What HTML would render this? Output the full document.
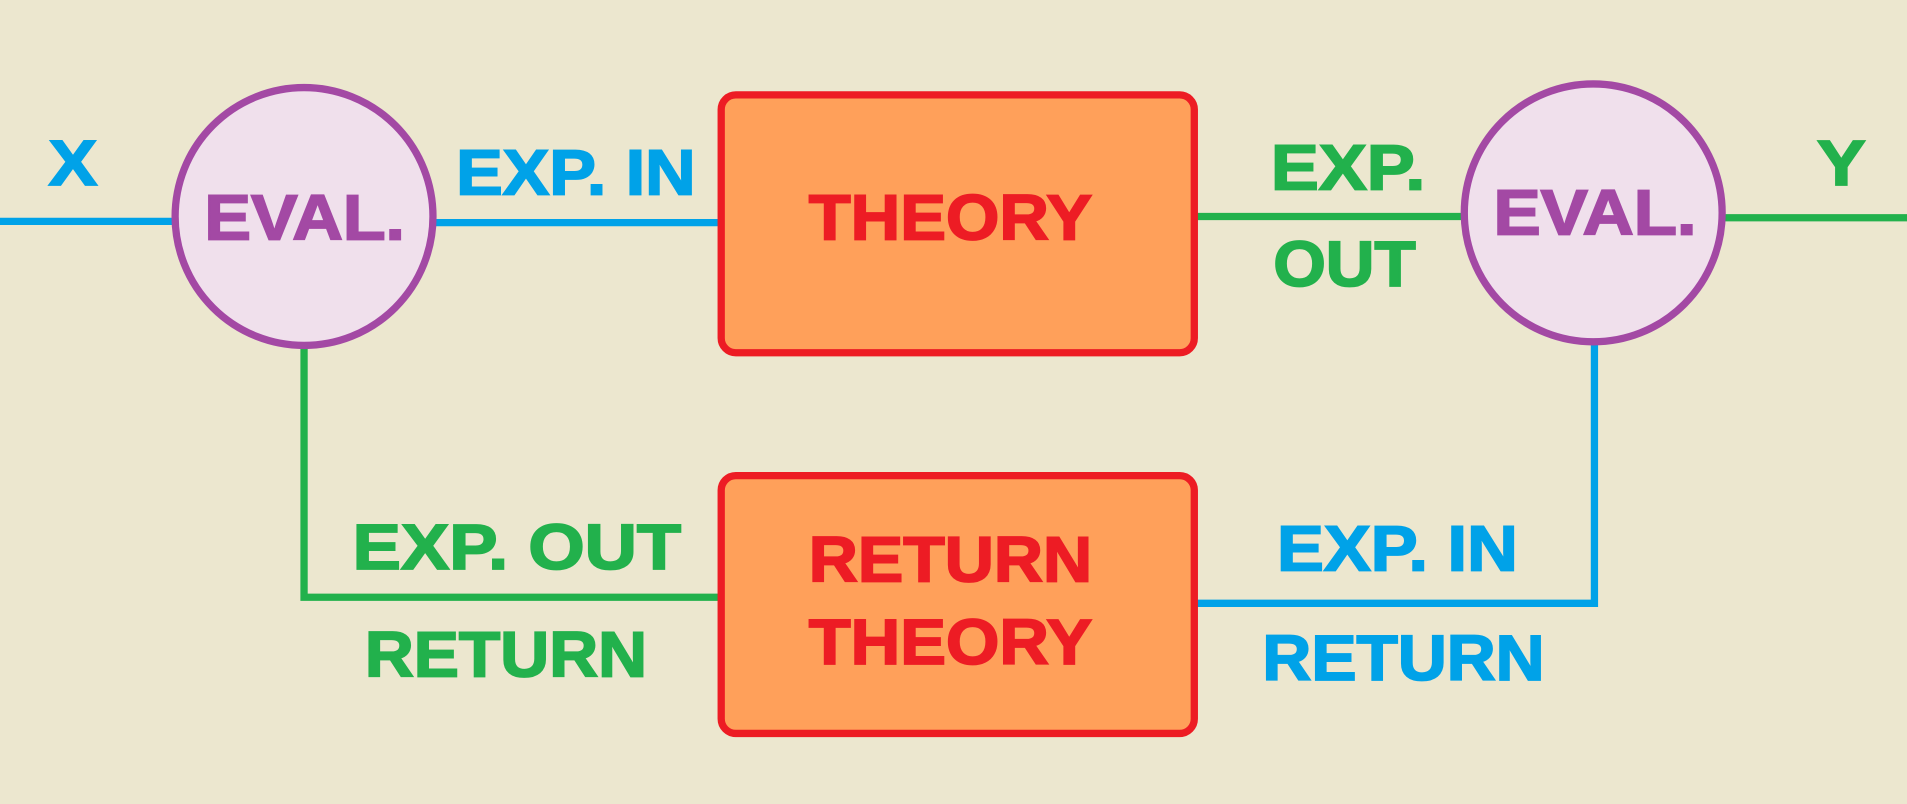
<!DOCTYPE html>
<html><head><meta charset="utf-8"><style>
html,body{margin:0;padding:0;background:#ece7cf;overflow:hidden}
svg{display:block}
text{font-family:"Liberation Sans",sans-serif;font-weight:bold;font-size:53px;stroke-width:1.5;stroke-linejoin:miter}
</style></head><body>
<svg width="1907" height="804" viewBox="0 0 1568 661" preserveAspectRatio="none" xmlns="http://www.w3.org/2000/svg">
<rect width="1568" height="661" fill="#ece7cf"/>
<g stroke-width="6" fill="none">
<line x1="0" y1="182" x2="145" y2="182" stroke="#00a2e8"/>
<line x1="355" y1="183" x2="593" y2="183" stroke="#00a2e8"/>
<line x1="982" y1="178" x2="1205" y2="178" stroke="#22b14c"/>
<line x1="1415" y1="179" x2="1568" y2="179" stroke="#22b14c"/>
<polyline points="250,285 250,491 593,491" stroke="#22b14c"/>
<polyline points="1311,283 1311,496 982,496" stroke="#00a2e8"/>
</g>
<circle cx="250" cy="178" r="106" fill="#f0e0ec" stroke="#a349a4" stroke-width="6"/>
<circle cx="1310" cy="175" r="106" fill="#f0e0ec" stroke="#a349a4" stroke-width="6"/>
<rect x="593" y="78" width="389" height="212" rx="12" fill="#ffa05a" stroke="#ed1c24" stroke-width="6"/>
<rect x="593" y="391" width="389" height="212" rx="12" fill="#ffa05a" stroke="#ed1c24" stroke-width="6"/>
<g fill="#00a2e8" stroke="#00a2e8">
<text x="40" y="152" textLength="40" lengthAdjust="spacingAndGlyphs">X</text>
<text x="375" y="160" textLength="197" lengthAdjust="spacingAndGlyphs">EXP. IN</text>
<text x="1050" y="469" textLength="198" lengthAdjust="spacingAndGlyphs">EXP. IN</text>
<text x="1038" y="559" textLength="232" lengthAdjust="spacingAndGlyphs">RETURN</text>
</g>
<g fill="#22b14c" stroke="#22b14c">
<text x="1494" y="152" textLength="40" lengthAdjust="spacingAndGlyphs">Y</text>
<text x="1045" y="156" textLength="127" lengthAdjust="spacingAndGlyphs">EXP.</text>
<text x="1047" y="235" textLength="117" lengthAdjust="spacingAndGlyphs">OUT</text>
<text x="290" y="468" textLength="270" lengthAdjust="spacingAndGlyphs">EXP. OUT</text>
<text x="300" y="556" textLength="232" lengthAdjust="spacingAndGlyphs">RETURN</text>
</g>
<g fill="#a349a4" stroke="#a349a4">
<text x="168" y="197" textLength="165" lengthAdjust="spacingAndGlyphs">EVAL.</text>
<text x="1228" y="193" textLength="167" lengthAdjust="spacingAndGlyphs">EVAL.</text>
</g>
<g fill="#ed1c24" stroke="#ed1c24">
<text x="665" y="197" textLength="233" lengthAdjust="spacingAndGlyphs">THEORY</text>
<text x="665" y="478" textLength="233" lengthAdjust="spacingAndGlyphs">RETURN</text>
<text x="665" y="546" textLength="233" lengthAdjust="spacingAndGlyphs">THEORY</text>
</g>
</svg>
</body></html>
